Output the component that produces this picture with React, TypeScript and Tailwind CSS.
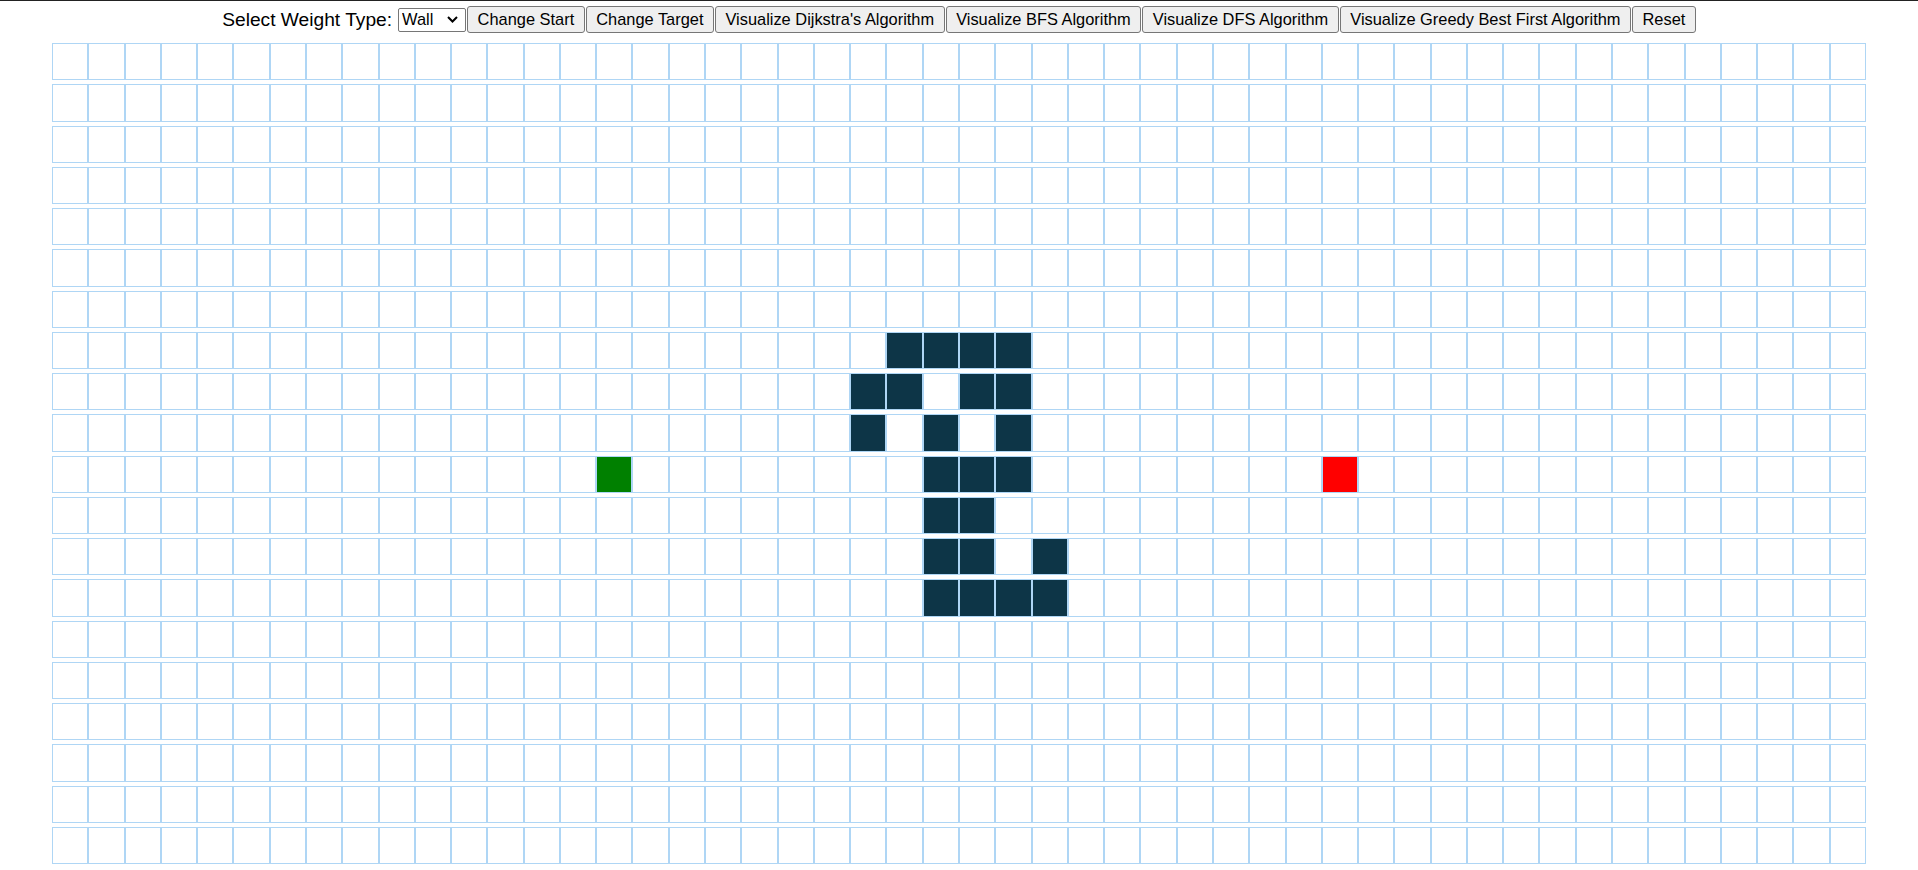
const ROWS = 20
const COLS = 50
const START = '10,15'
const TARGET = '10,35'

// walls drawn in the middle of the board
const WALLS = new Set([
  '7,23', '7,24', '7,25', '7,26',
  '8,22', '8,23', '8,25', '8,26',
  '9,22', '9,24', '9,26',
  '10,24', '10,25', '10,26',
  '11,24', '11,25',
  '12,24', '12,25', '12,27',
  '13,24', '13,25', '13,26', '13,27',
])

const BUTTONS = [
  'Change Start',
  'Change Target',
  "Visualize Dijkstra's Algorithm",
  'Visualize BFS Algorithm',
  'Visualize DFS Algorithm',
  'Visualize Greedy Best First Algorithm',
  'Reset',
]

function Cell({ id }: { id: string }) {
  let bg = 'bg-white'
  if (id === START) bg = 'bg-[#008000]'
  else if (id === TARGET) bg = 'bg-[#ff0000]'
  else if (WALLS.has(id)) bg = 'bg-[#0d3547]'
  return <div className={`h-[37.3px] border border-[#afd6f5] ${bg}`} />
}

export default function App() {
  return (
    <div className="min-h-[870px] bg-white font-['Liberation_Sans',Arial,sans-serif] text-black">
      {/* toolbar */}
      <div className="flex h-[38px] items-center justify-center border-t border-[#222]">
        <span className="mr-[6px] text-[19.2px] leading-none">Select Weight Type:</span>
        <div className="flex h-[24px] w-[68px] items-center rounded-[2px] border border-[#767676] bg-white">
          <select className="h-full w-full appearance-none bg-transparent pl-[3px] text-[16.4px] leading-none outline-none">
            <option>Wall</option>
            <option>Weight</option>
          </select>
          <svg
            className="pointer-events-none -ml-[18px] mr-[5px] h-[7px] w-[11px] shrink-0"
            viewBox="0 0 11 7"
            fill="none"
            stroke="black"
            strokeWidth={2}
          >
            <path d="M1 1l4.5 4.5L10 1" />
          </svg>
        </div>
        {BUTTONS.map((label) => (
          <button
            key={label}
            className="ml-px h-[27.5px] rounded-[3px] border border-[#767676] bg-[#efefef] px-[9.5px] text-[16.4px] leading-none text-black"
          >
            {label}
          </button>
        ))}
      </div>

      {/* board */}
      <div className="mx-auto mt-[5px] flex w-[1814px] flex-col gap-y-[3.96px]">
        {Array.from({ length: ROWS }, (_, r) => (
          <div key={r} className="grid grid-cols-[repeat(50,minmax(0,1fr))]">
            {Array.from({ length: COLS }, (_, c) => (
              <Cell key={c} id={`${r},${c}`} />
            ))}
          </div>
        ))}
      </div>
    </div>
  )
}
